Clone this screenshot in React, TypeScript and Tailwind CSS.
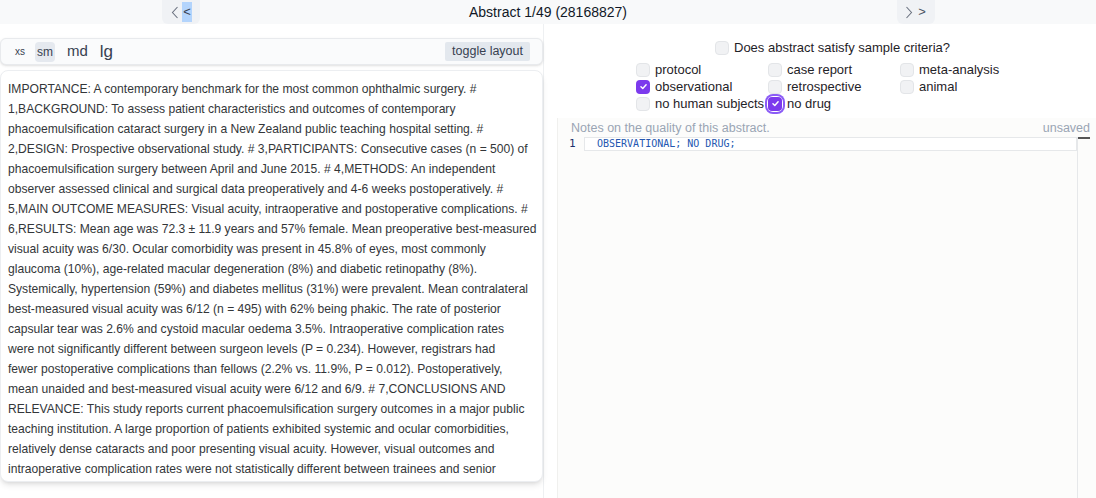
import React from "react";

const abstractLines = [
  "IMPORTANCE: A contemporary benchmark for the most common ophthalmic surgery. #",
  "1,BACKGROUND: To assess patient characteristics and outcomes of contemporary",
  "phacoemulsification cataract surgery in a New Zealand public teaching hospital setting. #",
  "2,DESIGN: Prospective observational study. # 3,PARTICIPANTS: Consecutive cases (n = 500) of",
  "phacoemulsification surgery between April and June 2015. # 4,METHODS: An independent",
  "observer assessed clinical and surgical data preoperatively and 4-6 weeks postoperatively. #",
  "5,MAIN OUTCOME MEASURES: Visual acuity, intraoperative and postoperative complications. #",
  "6,RESULTS: Mean age was 72.3 ± 11.9 years and 57% female. Mean preoperative best-measured",
  "visual acuity was 6/30. Ocular comorbidity was present in 45.8% of eyes, most commonly",
  "glaucoma (10%), age-related macular degeneration (8%) and diabetic retinopathy (8%).",
  "Systemically, hypertension (59%) and diabetes mellitus (31%) were prevalent. Mean contralateral",
  "best-measured visual acuity was 6/12 (n = 495) with 62% being phakic. The rate of posterior",
  "capsular tear was 2.6% and cystoid macular oedema 3.5%. Intraoperative complication rates",
  "were not significantly different between surgeon levels (P = 0.234). However, registrars had",
  "fewer postoperative complications than fellows (2.2% vs. 11.9%, P = 0.012). Postoperatively,",
  "mean unaided and best-measured visual acuity were 6/12 and 6/9. # 7,CONCLUSIONS AND",
  "RELEVANCE: This study reports current phacoemulsification surgery outcomes in a major public",
  "teaching institution. A large proportion of patients exhibited systemic and ocular comorbidities,",
  "relatively dense cataracts and poor presenting visual acuity. However, visual outcomes and",
  "intraoperative complication rates were not statistically different between trainees and senior",
];

interface CheckProps {
  label: string;
  checked?: boolean;
  focused?: boolean;
}

const Check: React.FC<CheckProps> = ({ label, checked, focused }) => {
  let box = "w-[14px] h-[14px] rounded-[4px] bg-[#f1f2f4] border border-[#e3e5e8]";
  if (checked) {
    box = "w-[14px] h-[14px] rounded-[4px] bg-[#7c3aed] flex items-center justify-center";
  }
  return (
    <div className="flex items-center gap-[5px] h-[17px]">
      <span
        className={
          focused
            ? "rounded-[5px] ring-2 ring-[#8b5cf6] ring-offset-1 flex"
            : "flex"
        }
      >
        <span className={box}>
          {checked && (
            <svg width="9" height="9" viewBox="0 0 10 10" fill="none">
              <path
                d="M2.2 5.3 L4.2 7.2 L7.9 3"
                stroke="white"
                strokeWidth="1.6"
                strokeLinecap="round"
                strokeLinejoin="round"
              />
            </svg>
          )}
        </span>
      </span>
      <span className="text-[13px] text-[#1f2328] leading-none whitespace-nowrap">{label}</span>
    </div>
  );
};

export default function App() {
  return (
    <div className="w-full h-[498px] bg-white flex flex-col overflow-hidden font-['Liberation_Sans',Arial,sans-serif]">
      <div className="h-6 bg-[#f8f9fa] flex justify-center shrink-0">
        <div className="w-[38px] bg-[#f0f2f5] rounded-b-md flex items-center justify-center gap-[3px] pl-[2px]">
          <svg width="8" height="13" viewBox="0 0 8 13" fill="none">
            <path d="M6.5 1 L1.5 6.5 L6.5 12" stroke="#6b7280" strokeWidth="1.1" />
          </svg>
          <span className="bg-[#b3d4fc] text-[#374151] text-[13px] leading-[20px] px-[1px]">&lt;</span>
        </div>
        <div className="w-[697px] text-center text-[14px] leading-6 text-[#111827]">
          Abstract 1/49 (28168827)
        </div>
        <div className="w-[38px] bg-[#f0f2f5] rounded-b-md flex items-center justify-center gap-[5px]">
          <svg width="8" height="13" viewBox="0 0 8 13" fill="none">
            <path d="M1.5 1 L6.5 6.5 L1.5 12" stroke="#6b7280" strokeWidth="1.1" />
          </svg>
          <span className="text-[#4b5563] text-[13px] leading-[20px]">&gt;</span>
        </div>
      </div>

      <div className="flex flex-1 min-h-0">
        <div className="w-[544px] shrink-0 border-r border-[#eef0f2] pt-[14px] flex flex-col gap-[5px]">
          <div className="h-[27px] border border-[#e8eaed] rounded-md bg-[#fafbfc] flex items-center pl-[12px] pr-[12px] shadow-sm">
            <span className="text-[10px] text-[#374151] px-[2px]">xs</span>
            <span className="text-[12px] text-[#374151] bg-[#e5e9ef] rounded px-[2px] ml-[8px] leading-[20px]">sm</span>
            <span className="text-[15px] text-[#374151] ml-[12px]">md</span>
            <span className="text-[17px] text-[#374151] ml-[12px]">lg</span>
            <button className="ml-auto bg-[#e3e8ee] text-[12.5px] text-[#374151] px-[7px] h-[19px] leading-[19px] rounded-[2px]">
              toggle layout
            </button>
          </div>
          <div className="h-[412px] border border-[#eceef1] rounded-lg bg-white shadow-md overflow-hidden pl-[7px] pt-[8px] text-[12.1px] leading-[20px] text-[#333639]">
            {abstractLines.map((line, i) => (
              <div key={i} className="whitespace-nowrap">
                {line}
              </div>
            ))}
          </div>
        </div>

        <div className="flex-1 flex flex-col">
          <div className="pl-[171px] pt-[15px]">
            <Check label="Does abstract satisfy sample criteria?" />
          </div>
          <div className="ml-[92px] mt-[5px] w-[396px] grid grid-cols-3">
            <Check label="protocol" />
            <Check label="case report" />
            <Check label="meta-analysis" />
            <Check label="observational" checked />
            <Check label="retrospective" />
            <Check label="animal" />
            <Check label="no human subjects" />
            <Check label="no drug" checked focused />
          </div>
          <div className="ml-[13px] mt-[6px] flex-1 bg-[#fcfcfb] border-l border-[#f0f0ee] pl-[13px] pr-[6px] pt-[3px] flex flex-col">
            <div className="flex justify-between text-[12.5px] leading-[15px] text-[#9aa5b4]">
              <span>Notes on the quality of this abstract.</span>
              <span>unsaved</span>
            </div>
            <div className="flex flex-1">
              <div className="w-[13px] -ml-[2px] mr-[2px] text-[11px] leading-[14px] text-[#1e2f6b] font-['DejaVu_Sans_Mono',monospace] pt-[1px]">
                1
              </div>
              <div className="flex-1 flex flex-col">
                <div className="h-[14px] border border-[#e6e8ea] bg-white pl-[12px] text-[10px] leading-[12px] text-[#2356b0] font-['DejaVu_Sans_Mono',monospace] mt-[1px]">
                  OBSERVATIONAL; NO DRUG;
                </div>
              </div>
              <div className="w-[13px] border-l border-[#e6e8ea] mt-[1px]">
                <div className="h-[2px] bg-[#555]" />
              </div>
            </div>
          </div>
        </div>
      </div>
    </div>
  );
}
